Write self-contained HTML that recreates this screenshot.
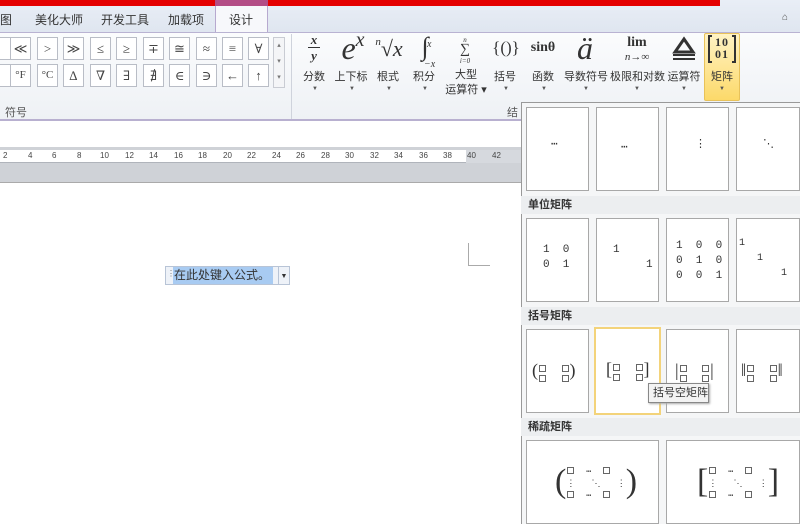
<!DOCTYPE html>
<html><head><meta charset="utf-8"><style>
*{margin:0;padding:0;box-sizing:border-box}
body{width:800px;height:524px;overflow:hidden;position:relative;background:#fff;font-family:"Liberation Sans","Noto Sans CJK SC",sans-serif;font-size:11px;color:#333}
.a{position:absolute}
.sb{position:absolute;width:21px;height:23px;border:1px solid #b9bdc6;background:#fff;font-family:"Liberation Serif","DejaVu Serif",serif;font-size:13px;text-align:center;line-height:21px;color:#444}
.eq{position:absolute;text-align:center;font-size:11px;color:#333;white-space:nowrap}
.ic{position:absolute;font-family:"Liberation Serif",serif;color:#333;text-align:center}
.arr{position:absolute;font-size:6px;color:#555}
.cell{position:absolute;background:#fff;border:1px solid #a8a8a8;overflow:hidden}
.hd{position:absolute;left:521px;width:279px;height:18px;background:#eceef0;font-size:11px;font-weight:bold;padding-left:7px;line-height:18px;color:#333}
.m{position:absolute;font-family:"Liberation Mono",monospace;font-size:11px;color:#333;line-height:15px;white-space:pre}
.bx{display:inline-block;width:7px;height:7px;border:1px solid #666;margin:0 1px}
</style></head><body>
<div class="a" style="left:0;top:0;width:800px;height:32px;background:linear-gradient(#e9eef6,#dfe6f0)"></div>
<div class="a" style="left:0;top:0;width:720px;height:6px;background:#e40000"></div>
<div class="a" style="left:215px;top:0;width:53px;height:33px;background:#f7f8fb;border:1px solid #b7a9cf;border-bottom:none;border-top:none"></div>
<div class="a" style="left:215px;top:0;width:53px;height:6px;background:#b34d86"></div>
<div class="a" style="left:0;top:11px;font-size:12px">图</div>
<div class="a" style="left:35px;top:11px;font-size:12px">美化大师</div>
<div class="a" style="left:101px;top:11px;font-size:12px">开发工具</div>
<div class="a" style="left:168px;top:11px;font-size:12px">加载项</div>
<div class="a" style="left:229px;top:11px;font-size:12px">设计</div>
<div class="a" style="left:782px;top:12px;font-size:10px;color:#555">⌂</div>
<div class="a" style="left:0;top:32px;width:800px;height:89px;background:linear-gradient(#fbfcfd,#eef1f5);border-top:1px solid #b9b3d2;border-bottom:2px solid #b8b0d0"></div>
<div class="a" style="left:291px;top:34px;width:1px;height:85px;background:#cfd3dc"></div>
<div class="sb" style="left:-10px;top:37px"></div><div class="sb" style="left:-10px;top:64px"></div>
<div class="sb" style="left:10px;top:37px">≪</div><div class="sb" style="left:37px;top:37px">&gt;</div><div class="sb" style="left:63px;top:37px">≫</div><div class="sb" style="left:90px;top:37px">≤</div><div class="sb" style="left:116px;top:37px">≥</div><div class="sb" style="left:143px;top:37px">∓</div><div class="sb" style="left:169px;top:37px">≅</div><div class="sb" style="left:196px;top:37px">≈</div><div class="sb" style="left:222px;top:37px">≡</div><div class="sb" style="left:248px;top:37px">∀</div>
<div class="sb" style="left:10px;top:64px;font-size:11px">°F</div><div class="sb" style="left:37px;top:64px;font-size:11px">°C</div><div class="sb" style="left:63px;top:64px">∆</div><div class="sb" style="left:90px;top:64px">∇</div><div class="sb" style="left:116px;top:64px">∃</div><div class="sb" style="left:143px;top:64px">∄</div><div class="sb" style="left:169px;top:64px">∈</div><div class="sb" style="left:196px;top:64px">∋</div><div class="sb" style="left:222px;top:64px">←</div><div class="sb" style="left:248px;top:64px">↑</div>
<div class="a" style="left:273px;top:37px;width:12px;height:51px;border:1px solid #c9ccd3;background:#f4f5f7;font-size:7px;color:#777;text-align:center;line-height:16px">▴<br>▾<br>▾</div>
<div class="a" style="left:5px;top:104px;font-size:11px;color:#555">符号</div>
<div class="a" style="left:507px;top:104px;font-size:11px;color:#555">结</div>
<div class="ic" style="left:306px;top:33px;width:16px;font-style:italic;font-size:13px;line-height:13px;font-weight:bold">x<div style="border-top:1px solid #333;margin:1px 2px"></div>y</div>
<div class="ic" style="left:333px;top:30px;width:40px;font-style:italic;font-size:32px;line-height:36px">e<span style="font-size:20px;vertical-align:top;line-height:20px">x</span></div>
<div class="ic" style="left:372px;top:36px;width:34px;font-size:22px;font-style:italic"><span style="font-size:11px;vertical-align:top">n</span>√x</div>
<div class="ic" style="left:410px;top:32px;width:30px;font-size:26px;line-height:30px">∫<span style="position:absolute;left:17px;top:-2px;font-size:10px;font-style:italic">x</span><span style="position:absolute;left:14px;top:18px;font-size:10px;font-style:italic">−x</span></div>
<div class="ic" style="left:456px;top:34px;width:18px;font-size:14px;line-height:10px"><span style="font-size:7px;font-style:italic">n</span><br>∑<br><span style="font-size:7px;font-style:italic">i=0</span></div>
<div class="ic" style="left:490px;top:38px;width:32px;font-size:17px">{()}</div>
<div class="ic" style="left:526px;top:40px;width:34px;font-size:14px;font-weight:bold">sinθ</div>
<div class="ic" style="left:570px;top:30px;width:30px;font-size:32px;font-style:italic;line-height:36px">ä</div>
<div class="ic" style="left:620px;top:36px;width:34px;font-size:14px;line-height:14px;font-weight:bold">lim<br><span style="font-size:11px;font-style:italic;font-weight:normal">n→∞</span></div>
<div class="a" style="left:671px;top:36px;width:26px;height:24px"><svg width="26" height="24"><polygon points="13,3 22,16 4,16" fill="none" stroke="#333" stroke-width="3"/><rect x="2" y="18" width="22" height="2" fill="#333"/><rect x="2" y="22" width="22" height="2" fill="#333"/></svg></div>
<div class="a" style="left:704px;top:33px;width:36px;height:68px;background:linear-gradient(#fff3c4,#fcd96a);border:1px solid #e8c25a;border-radius:2px"></div>
<div class="a" style="left:707px;top:35px;width:30px;height:28px"><svg width="30" height="28"><path d="M5 1H2V27H5M25 1H28V27H25" fill="none" stroke="#333" stroke-width="2"/></svg></div>
<div class="ic" style="left:707px;top:36px;width:30px;font-size:12px;line-height:12px;font-weight:bold;letter-spacing:1px">10<br>01</div>
<div class="eq" style="left:299px;top:68px;width:30px">分数</div>
<div class="eq" style="left:331px;top:68px;width:40px">上下标</div>
<div class="eq" style="left:373px;top:68px;width:30px">根式</div>
<div class="eq" style="left:409px;top:68px;width:30px">积分</div>
<div class="eq" style="left:442px;top:68px;width:48px;line-height:15px">大型<br>运算符 ▾</div>
<div class="eq" style="left:490px;top:68px;width:30px">括号</div>
<div class="eq" style="left:528px;top:68px;width:30px">函数</div>
<div class="eq" style="left:562px;top:68px;width:48px">导数符号</div>
<div class="eq" style="left:610px;top:68px;width:55px">极限和对数</div>
<div class="eq" style="left:665px;top:68px;width:38px">运算符</div>
<div class="eq" style="left:707px;top:68px;width:30px">矩阵</div>
<div class="arr" style="left:312px;top:86px">▼</div><div class="arr" style="left:349px;top:86px">▼</div><div class="arr" style="left:386px;top:86px">▼</div><div class="arr" style="left:422px;top:86px">▼</div><div class="arr" style="left:503px;top:86px">▼</div><div class="arr" style="left:541px;top:86px">▼</div><div class="arr" style="left:583px;top:86px">▼</div><div class="arr" style="left:634px;top:86px">▼</div><div class="arr" style="left:681px;top:86px">▼</div><div class="arr" style="left:719px;top:86px">▼</div>
<div class="a" style="left:0;top:147px;width:521px;height:35px;background:#cfd2d7"></div>
<div class="a" style="left:0;top:150px;width:521px;height:13px;background:#fff;border-bottom:1px solid #b0b4bb"></div>
<div class="a" style="left:466px;top:150px;width:55px;height:13px;background:#d6d9de"></div>
<div class="a" style="left:0;top:151px;width:521px;font-size:8px;color:#444;white-space:nowrap">
<span class="a" style="left:3px">2</span><span class="a" style="left:28px">4</span><span class="a" style="left:52px">6</span><span class="a" style="left:77px">8</span><span class="a" style="left:100px">10</span><span class="a" style="left:125px">12</span><span class="a" style="left:149px">14</span><span class="a" style="left:174px">16</span><span class="a" style="left:198px">18</span><span class="a" style="left:223px">20</span><span class="a" style="left:247px">22</span><span class="a" style="left:272px">24</span><span class="a" style="left:296px">26</span><span class="a" style="left:321px">28</span><span class="a" style="left:345px">30</span><span class="a" style="left:370px">32</span><span class="a" style="left:394px">34</span><span class="a" style="left:419px">36</span><span class="a" style="left:443px">38</span><span class="a" style="left:467px">40</span><span class="a" style="left:492px">42</span></div>
<div class="a" style="left:0;top:182px;width:521px;height:1px;background:#aaa"></div>
<div class="a" style="left:468px;top:243px;width:1px;height:22px;background:#aaa"></div>
<div class="a" style="left:468px;top:265px;width:22px;height:1px;background:#aaa"></div>
<div class="a" style="left:165px;top:266px;width:125px;height:19px;border:1px solid #b8c4d6;background:#eef2f8"></div>
<div class="a" style="left:173px;top:267px;width:100px;height:17px;background:#a8cbf2;font-size:12px;line-height:17px;color:#333;padding-left:1px">在此处键入公式。</div>
<div class="a" style="left:167px;top:269px;font-size:8px;color:#777">⋮</div>
<div class="a" style="left:278px;top:267px;width:11px;height:17px;border-left:1px solid #b8c4d6;font-size:7px;line-height:20px;text-align:center">▼</div>
<div class="a" style="left:521px;top:102px;width:279px;height:422px;background:#f5f6f7;border-left:1px solid #999;border-top:1px solid #999"></div>
<div class="cell" style="left:526px;top:107px;width:63px;height:84px"><div class="m" style="left:24px;top:30px">⋯</div></div>
<div class="cell" style="left:596px;top:107px;width:63px;height:84px"><div class="m" style="left:24px;top:33px">⋯</div></div>
<div class="cell" style="left:666px;top:107px;width:63px;height:84px"><div class="m" style="left:28px;top:30px">⋮</div></div>
<div class="cell" style="left:736px;top:107px;width:64px;height:84px"><div class="m" style="left:26px;top:30px">⋱</div></div>
<div class="hd" style="top:196px">单位矩阵</div>
<div class="cell" style="left:526px;top:218px;width:63px;height:84px"><div class="m" style="left:16px;top:24px">1  0
0  1</div></div>
<div class="cell" style="left:596px;top:218px;width:63px;height:84px"><div class="m" style="left:16px;top:24px">1
     1</div></div>
<div class="cell" style="left:666px;top:218px;width:63px;height:84px"><div class="m" style="left:9px;top:20px">1  0  0
0  1  0
0  0  1</div></div>
<div class="cell" style="left:736px;top:218px;width:64px;height:84px"><div class="m" style="left:2px;top:17px;font-size:10px;line-height:15px">1
   1
       1</div></div>
<div class="hd" style="top:307px">括号矩阵</div>
<div class="cell" style="left:526px;top:329px;width:63px;height:84px"><div class="m" style="left:5px;top:26px;font-size:18px;line-height:28px;font-family:'Liberation Serif',serif">(<span style="display:inline-block;vertical-align:middle;line-height:9px"><span class="bx"></span>&nbsp;&nbsp;&nbsp;<span class="bx"></span><br><span class="bx"></span>&nbsp;&nbsp;&nbsp;<span class="bx"></span></span>)</div></div>
<div class="cell" style="left:594px;top:327px;width:67px;height:88px;border:2px solid #f3d37a"><div class="m" style="left:10px;top:26px;font-size:18px;line-height:28px;font-family:'Liberation Serif',serif">[<span style="display:inline-block;vertical-align:middle;line-height:9px"><span class="bx"></span>&nbsp;&nbsp;&nbsp;<span class="bx"></span><br><span class="bx"></span>&nbsp;&nbsp;&nbsp;<span class="bx"></span></span>]</div></div>
<div class="cell" style="left:666px;top:329px;width:63px;height:84px"><div class="m" style="left:8px;top:26px;font-size:18px;line-height:28px;font-family:'Liberation Serif',serif">|<span style="display:inline-block;vertical-align:middle;line-height:9px"><span class="bx"></span>&nbsp;&nbsp;&nbsp;<span class="bx"></span><br><span class="bx"></span>&nbsp;&nbsp;&nbsp;<span class="bx"></span></span>|</div></div>
<div class="cell" style="left:736px;top:329px;width:64px;height:84px"><div class="m" style="left:4px;top:26px;font-size:18px;line-height:28px;font-family:'Liberation Serif',serif">‖<span style="display:inline-block;vertical-align:middle;line-height:9px"><span class="bx"></span>&nbsp;&nbsp;&nbsp;<span class="bx"></span><br><span class="bx"></span>&nbsp;&nbsp;&nbsp;<span class="bx"></span></span>‖</div></div>
<div class="a" style="left:648px;top:383px;width:61px;height:20px;background:#f3f3f3;border:1px solid #888;box-shadow:1px 1px 2px #aaa;font-size:11px;line-height:18px;padding-left:4px">括号空矩阵</div>
<div class="hd" style="top:418px">稀疏矩阵</div>
<div class="cell" style="left:526px;top:440px;width:133px;height:84px"><div class="m" style="left:28px;top:16px;font-size:34px;line-height:50px;font-family:'Liberation Serif',serif">(<span style="display:inline-block;vertical-align:middle;font-family:'Liberation Mono',monospace;font-size:9px;line-height:12px;white-space:pre"><span class="bx"></span>  ⋯  <span class="bx"></span>
⋮   ⋱   ⋮
<span class="bx"></span>  ⋯  <span class="bx"></span></span>)</div></div>
<div class="cell" style="left:666px;top:440px;width:134px;height:84px"><div class="m" style="left:30px;top:16px;font-size:34px;line-height:50px;font-family:'Liberation Serif',serif">[<span style="display:inline-block;vertical-align:middle;font-family:'Liberation Mono',monospace;font-size:9px;line-height:12px;white-space:pre"><span class="bx"></span>  ⋯  <span class="bx"></span>
⋮   ⋱   ⋮
<span class="bx"></span>  ⋯  <span class="bx"></span></span>]</div></div>
</body></html>
